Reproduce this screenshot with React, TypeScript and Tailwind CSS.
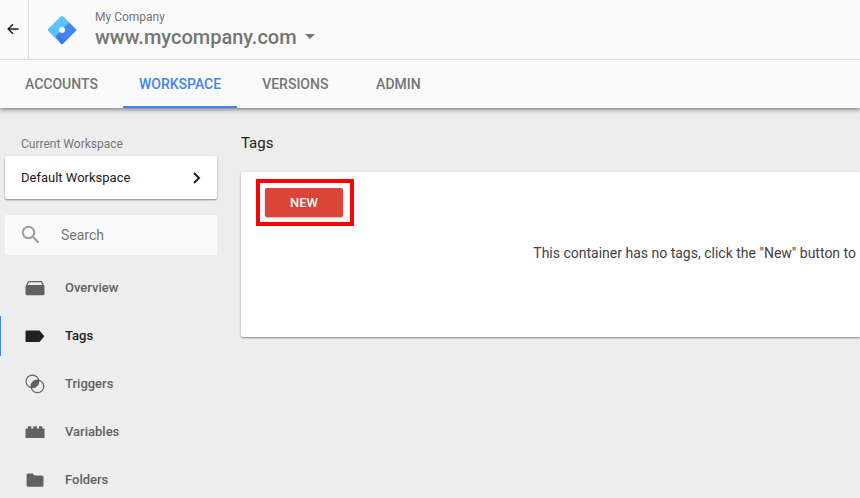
import type { ReactNode } from "react";

const tabs = ["Accounts", "Workspace", "Versions", "Admin"];

function NavIcon({ children }: { children: ReactNode }) {
  return (
    <svg viewBox="0 0 20 20" className="size-5 shrink-0" fill="currentColor" aria-hidden="true">
      {children}
    </svg>
  );
}

const navItems: { label: string; icon: ReactNode }[] = [
  {
    label: "Overview",
    icon: (
      <>
        <path d="M1.500 7.500 3.600 3.600h12.800l2.100 3.900" fill="none" stroke="currentColor" strokeWidth="1.2" strokeLinejoin="round" />
        <rect x="0.5" y="7" width="19" height="10.3" rx="1.5" />
      </>
    ),
  },
  {
    label: "Tags",
    icon: <path d="M1.5 4.5h13L19.3 10.2 14.5 16h-13a1 1 0 0 1-1-1v-9.500a1 1 0 0 1 1-1z" />,
  },
  {
    label: "Triggers",
    icon: (
      <>
        <circle cx="7.400" cy="7.400" r="6.300" fill="none" stroke="currentColor" strokeWidth="1.200" />
        <circle cx="12.400" cy="12.400" r="6.300" fill="none" stroke="currentColor" strokeWidth="1.200" />
        <path d="M13.600 6.200A6.300 6.300 0 0 1 6.200 13.600 6.300 6.300 0 0 1 13.600 6.200z" />
      </>
    ),
  },
  {
    label: "Variables",
    icon: <path d="M.5 6.500h2.300V4.200h3.500v2.300h2V4.200h3.700v2.300h2V4.200h3.300v2.300h2.200V16H.5z" />,
  },
  {
    label: "Folders",
    icon: (
      <path d="M3.200 3.500h4.600l1.800 2h7.200A1.600 1.600 0 0 1 18.500 7v8.200a1.600 1.600 0 0 1-1.700 1.600H3.200a1.600 1.600 0 0 1-1.600-1.600V5.100a1.600 1.600 0 0 1 1.600-1.600z" />
    ),
  },
];

function Logo() {
  return (
    <svg viewBox="0 0 30 30" className="size-[30px] shrink-0" role="img" aria-label="Tag Manager">
      <defs>
        <linearGradient id="light" x1="0" y1="1" x2="1" y2="0">
          <stop offset="0" stopColor="#5bbdf5" />
          <stop offset="1" stopColor="#5ccbfa" />
        </linearGradient>
        <linearGradient id="dark" x1="0" y1="1" x2="1" y2="0">
          <stop offset="0" stopColor="#2f6fd8" />
          <stop offset="0.5" stopColor="#4285f4" />
        </linearGradient>
        <clipPath id="diamond">
          <rect x="4.500" y="4.500" width="21" height="21" rx="1.500" transform="rotate(45 15 15)" />
        </clipPath>
      </defs>
      <g clipPath="url(#diamond)">
        <rect width="30" height="30" fill="url(#light)" />
        <path d="M22 7.500 30 15 15 30 8.500 21.500z" fill="url(#dark)" />
      </g>
      <circle cx="15" cy="15" r="3" fill="#fafafa" />
    </svg>
  );
}

export default function App() {
  return (
    <div className="flex min-h-screen flex-col overflow-x-hidden bg-[#ededed] font-['Roboto',sans-serif] text-[#212121]">
      <header className="z-10 bg-[#fafafa] shadow-[0_1px_5px_rgba(0,0,0,0.6)]">
        <div className="flex h-[60px] border-b border-[#d9d9d9]">
          <button type="button" aria-label="Back" className="flex w-[29px] items-center justify-center border-r border-[#d9d9d9] pr-0.5 pb-0.5">
            <svg viewBox="0 0 12 12" className="size-3" fill="none" stroke="#212121" strokeWidth="1.500" aria-hidden="true">
              <path d="M11.500 6H1.500M6 1.200 1.200 6 6 10.800" />
            </svg>
          </button>
          <div className="flex items-center pl-[18px]">
            <Logo />
            <div className="flex flex-col pb-0.5 pl-[18px] text-[#757575]">
              <span className="text-xs leading-4">My Company</span>
              <button type="button" className="flex items-center gap-2 text-xl leading-6 font-medium">
                www.mycompany.com
                <svg viewBox="0 0 10 5" className="h-[5px] w-2.5" fill="currentColor" aria-hidden="true">
                  <path d="M0 0h10L5 5z" />
                </svg>
              </button>
            </div>
          </div>
        </div>
        <nav className="flex h-12 gap-[9px] pl-[9px]">
          {tabs.map((tab) => (
            <a
              key={tab}
              href="#"
              aria-current={tab === "Workspace" ? "page" : undefined}
              className={`flex min-w-[90px] items-center justify-center border-y-2 border-t-transparent px-4 text-sm font-medium uppercase ${
                tab === "Workspace" ? "border-b-[#4285f4] text-[#4285f4]" : "border-b-transparent text-[#757575]"
              }`}
            >
              {tab}
            </a>
          ))}
        </nav>
      </header>

      <div className="flex grow">
        <aside className="w-[217px] shrink-0 pt-7">
          <div className="pl-[5px]">
            <p className="pb-1 pl-4 text-xs leading-4 text-[#757575]">Current Workspace</p>
            <button
              type="button"
              className="flex h-[43px] w-full items-center justify-between rounded-xs bg-white pr-4 pl-4 text-[13px] shadow-[0_1px_2px_rgba(0,0,0,0.45)]"
            >
              Default Workspace
              <svg viewBox="0 0 8 12" className="h-3 w-2" fill="none" stroke="#212121" strokeWidth="2" aria-hidden="true">
                <path d="M1 1l5 5-5 5" />
              </svg>
            </button>
            <label className="mt-4 flex h-10 items-center rounded-xs bg-[#fafafa] pl-4">
              <svg viewBox="0 0 20 20" className="size-5 shrink-0" fill="none" stroke="#9e9e9e" strokeWidth="2" aria-hidden="true">
                <circle cx="7.500" cy="7.500" r="5.700" />
                <path d="m11.700 11.700 6 6" />
              </svg>
              <input
                type="text"
                aria-label="Search"
                placeholder="Search"
                className="ml-5 w-full min-w-0 bg-transparent text-sm outline-none placeholder:text-[#757575]"
              />
            </label>
          </div>
          <nav className="flex flex-col gap-2 pt-[13px]">
            {navItems.map(({ label, icon }) => (
              <a
                key={label}
                href="#"
                className={`flex h-10 items-center gap-5 border-l pl-6 text-[13px] font-medium ${
                  label === "Tags" ? "border-[#4285f4] text-[#212121]" : "border-transparent text-[#616161]"
                }`}
              >
                <NavIcon>{icon}</NavIcon>
                {label}
              </a>
            ))}
          </nav>
        </aside>

        <main className="min-w-0 grow pt-[23px] pl-6">
          <h1 className="text-[15px] leading-6">Tags</h1>
          <section className="mt-[17px] h-[165px] rounded-l-xs bg-white pt-[7px] pl-[15px] shadow-[0_1px_2px_rgba(0,0,0,0.45)]">
            <div className="w-fit border-4 border-[#ff0000] py-[5px] pr-[7px] pl-[5px]">
              <button
                type="button"
                className="flex h-[29px] w-[78px] items-center justify-center rounded-xs bg-[#db4437] text-[13px] font-medium text-white shadow-[0_1px_2px_rgba(0,0,0,0.3)]"
              >
                NEW
              </button>
            </div>
            <p className="pt-[15px] pr-1 text-right text-sm leading-6 text-[#424242]">
              This container has no tags, click the "New" button to
            </p>
          </section>
        </main>
      </div>
    </div>
  );
}
